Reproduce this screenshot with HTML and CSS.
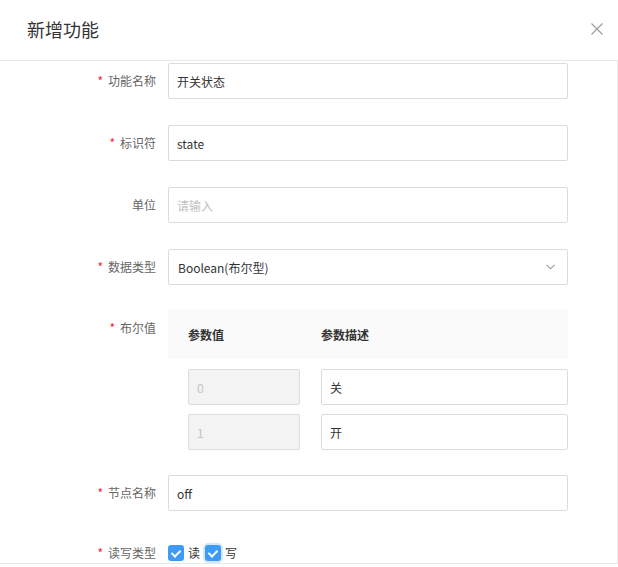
FILE: index.html
```html
<!DOCTYPE html>
<html lang="zh-CN">
<head>
    <meta charset="UTF-8">
    <meta name="viewport" content="width=device-width, initial-scale=1.0">
    <title>新增功能</title>
    <link rel="stylesheet" href="styles.css">
</head>
<body>
    <div class="modal">
        <div class="modal-header">
            <span class="modal-title">新增功能</span>
            <span class="modal-close">
                <svg width="12" height="12" viewBox="0 0 12 12">
                    <path d="M0.5 0.5L11.5 11.5M11.5 0.5L0.5 11.5" stroke="#999" stroke-width="1.1" fill="none"/>
                </svg>
            </span>
        </div>
        <div class="modal-body">
            <div class="form-item">
                <label class="form-label required">功能名称</label>
                <div class="form-control"><input class="input" type="text" value="开关状态"></div>
            </div>
            <div class="form-item">
                <label class="form-label required">标识符</label>
                <div class="form-control"><input class="input" type="text" value="state"></div>
            </div>
            <div class="form-item">
                <label class="form-label">单位</label>
                <div class="form-control"><input class="input" type="text" placeholder="请输入"></div>
            </div>
            <div class="form-item">
                <label class="form-label required">数据类型</label>
                <div class="form-control">
                    <div class="select">
                        <span>Boolean(布尔型)</span>
                        <svg width="9" height="6" viewBox="0 0 9 6">
                            <path d="M0.5 0.8L4.5 4.8L8.5 0.8" stroke="#999" stroke-width="1.1" fill="none"/>
                        </svg>
                    </div>
                </div>
            </div>
            <div class="form-item bool-item">
                <label class="form-label required">布尔值</label>
                <div class="form-control">
                    <div class="bool-table">
                        <div class="bool-head">
                            <span class="col-value">参数值</span>
                            <span class="col-desc">参数描述</span>
                        </div>
                        <div class="bool-row">
                            <div class="col-value"><input class="input" type="text" value="0" disabled></div>
                            <div class="col-desc"><input class="input" type="text" value="关"></div>
                        </div>
                        <div class="bool-row">
                            <div class="col-value"><input class="input" type="text" value="1" disabled></div>
                            <div class="col-desc"><input class="input" type="text" value="开"></div>
                        </div>
                    </div>
                </div>
            </div>
            <div class="form-item">
                <label class="form-label required">节点名称</label>
                <div class="form-control"><input class="input" type="text" value="off"></div>
            </div>
            <div class="form-item check-item">
                <label class="form-label required">读写类型</label>
                <div class="form-control checks">
                    <label class="checkbox"><span class="check-box"></span>读</label>
                    <label class="checkbox"><span class="check-box focused"></span>写</label>
                </div>
            </div>
        </div>
        <div class="modal-footer"></div>
    </div>
</body>
</html>
```

FILE: styles.css
```css
body {
    margin: 0;
    background: #fff;
    font-family: "Noto Sans CJK SC", "Liberation Sans", sans-serif;
    font-size: 12px;
    color: #333;
}
.modal {
    width: 618px;
    height: 567px;
    overflow: hidden;
}
.modal-header {
    height: 60px;
    border-bottom: 1px solid #e8e8e8;
    display: flex;
    align-items: center;
    justify-content: space-between;
    padding: 0 15px 0 27px;
}
.modal-title {
    font-size: 18px;
    color: #333;
    line-height: 24px;
    margin-top: -2px;
}
.modal-close {
    display: flex;
    margin-top: -3px;
}
.modal-body {
    height: 500px;
    padding-top: 2px;
    border-right: 1px solid #ececec;
    overflow: hidden;
}
.modal-footer {
    border-top: 1px solid #e8e8e8;
}
.form-item {
    display: flex;
    align-items: flex-start;
    margin-bottom: 26px;
}
.form-label {
    width: 156px;
    height: 36px;
    margin-right: 12px;
    text-align: right;
    line-height: 36px;
    color: #666;
    flex-shrink: 0;
    overflow: hidden;
}
.form-label.required::before {
    content: "*";
    color: #f5222d;
    margin-right: 5px;
}
.form-control {
    width: 400px;
}
.input {
    display: block;
    box-sizing: border-box;
    width: 100%;
    height: 36px;
    padding: 0 8px;
    border: 1px solid #dcdcdc;
    border-radius: 2px;
    background: #fff;
    font-family: inherit;
    font-size: 12px;
    color: #333;
    outline: none;
}
.input::placeholder {
    color: #bfbfbf;
}
.input:disabled {
    background: #f3f3f3;
    color: #c4c4c4;
}
.select {
    box-sizing: border-box;
    height: 36px;
    border: 1px solid #dcdcdc;
    border-radius: 2px;
    display: flex;
    align-items: center;
    justify-content: space-between;
    padding: 0 12px 0 9px;
}
.bool-item {
    margin-top: -1px;
    margin-bottom: 25px;
}
.bool-head {
    height: 49px;
    background: #fafafa;
    display: flex;
    align-items: center;
    padding-left: 20px;
    font-weight: bold;
    color: #333;
}
.bool-row {
    display: flex;
    height: 36px;
    padding-left: 20px;
    margin-top: 9px;
}
.bool-head + .bool-row {
    margin-top: 10px;
}
.col-value {
    width: 133px;
    flex-shrink: 0;
}
.bool-row .col-value .input {
    width: 112px;
}
.col-desc {
    flex: 1;
}
.check-item .form-label {
    height: 32px;
    line-height: 32px;
}
.checks {
    display: flex;
    align-items: center;
    height: 32px;
}
.checkbox {
    display: flex;
    align-items: center;
    margin-right: 5px;
    color: #333;
    line-height: 16px;
}
.check-box {
    width: 16px;
    height: 16px;
    box-sizing: border-box;
    border-radius: 3px;
    background: #3d9bf5;
    margin-right: 4px;
    position: relative;
}
.check-box::after {
    content: "";
    position: absolute;
    left: 5px;
    top: 3px;
    width: 4px;
    height: 7px;
    border: solid #fff;
    border-width: 0 2px 2px 0;
    transform: rotate(45deg);
}
.check-box.focused {
    box-shadow: 0 0 0 2px #d3e8fd;
}
```
